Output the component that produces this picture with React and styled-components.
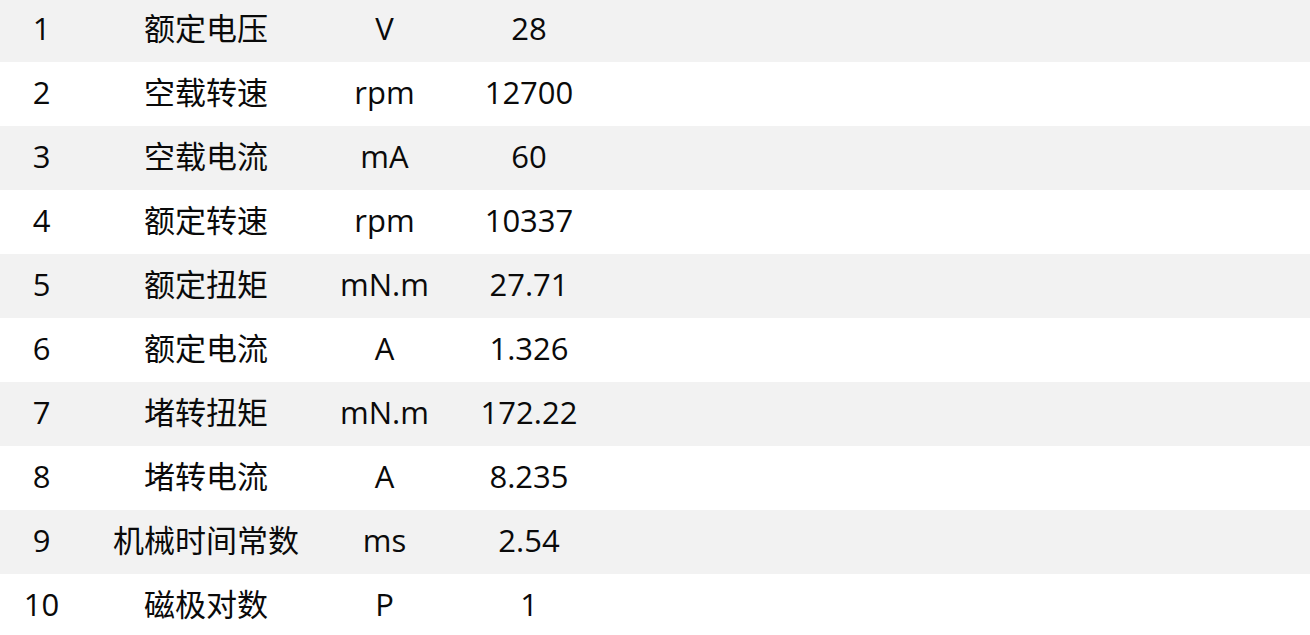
import React from "react";
import styled, { createGlobalStyle } from "styled-components";

const Global = createGlobalStyle`
  html, body { margin: 0; padding: 0; background: #fff; overflow: hidden; }
  body { font-family: "Open Sans", "Noto Sans CJK SC", sans-serif; color: #000; }
`;

const Table = styled.div`
  display: flex;
  flex-direction: column;
  margin-top: -2px;
  width: 1310px;
`;

const Row = styled.div`
  display: grid;
  grid-template-columns: 83px 246px 111px 178px 1fr;
  height: 64px;
  align-items: center;
  background: ${(p) => (p.$shaded ? "#f2f2f2" : "#ffffff")};
`;

const Cell = styled.div`
  text-align: center;
  font-size: 31px;
  line-height: 1;
  padding-bottom: 4px;
  white-space: nowrap;
  color: #0a0a0a;
  font-family: "Open Sans", "Noto Sans CJK SC", sans-serif;
`;

const data = [
  ["1", "额定电压", "V", "28"],
  ["2", "空载转速", "rpm", "12700"],
  ["3", "空载电流", "mA", "60"],
  ["4", "额定转速", "rpm", "10337"],
  ["5", "额定扭矩", "mN.m", "27.71"],
  ["6", "额定电流", "A", "1.326"],
  ["7", "堵转扭矩", "mN.m", "172.22"],
  ["8", "堵转电流", "A", "8.235"],
  ["9", "机械时间常数", "ms", "2.54"],
  ["10", "磁极对数", "P", "1"],
];

export default function App() {
  return (
    <>
      <Global />
      <Table>
        {data.map((r, i) => (
          <Row key={r[0]} $shaded={i % 2 === 0}>
            {r.map((c, j) => (
              <Cell key={j}>{c}</Cell>
            ))}
            <div />
          </Row>
        ))}
      </Table>
    </>
  );
}
